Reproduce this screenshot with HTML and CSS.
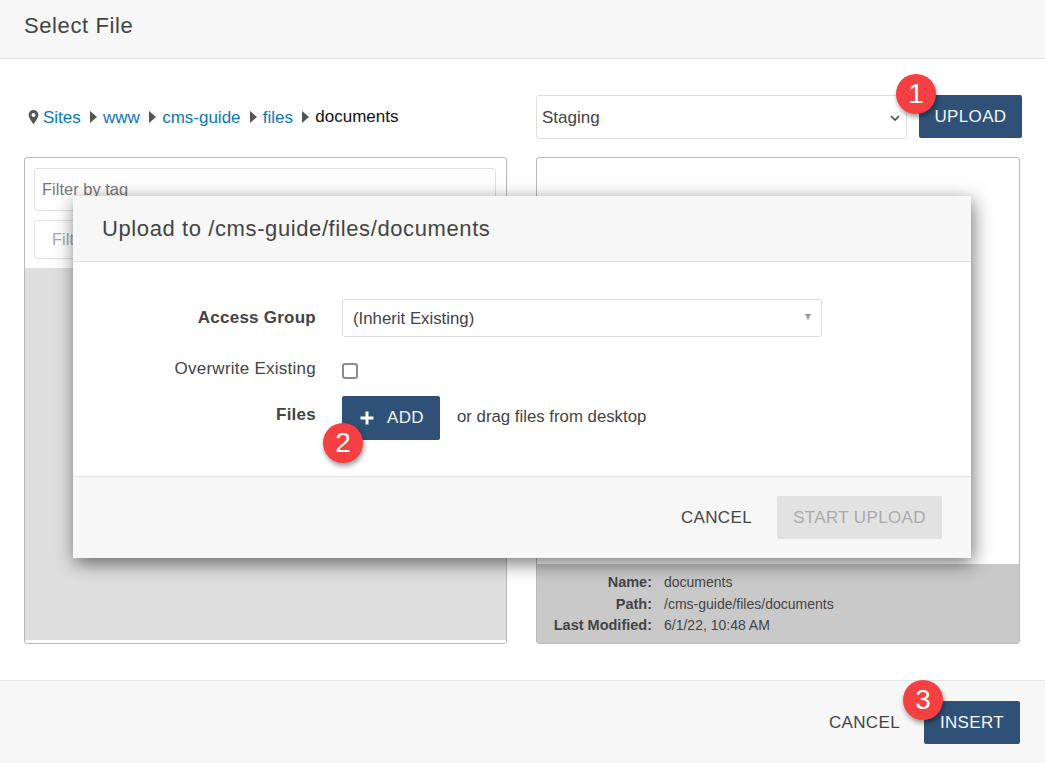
FILE: index.html
```html
<!DOCTYPE html>
<html lang="en">
<head>
<meta charset="utf-8">
<title>Select File</title>
<link rel="stylesheet" href="styles.css">
</head>
<body>
<div class="page">
  <header class="page-head"><h1>Select File</h1></header>
  <main class="page-body">
    <div class="col-left">
      <nav class="crumbs">
        <svg class="pin" viewBox="0 0 12 16" width="11" height="14"><path fill-rule="evenodd" fill="#555" d="M6 0a5.6 5.6 0 0 0-5.6 5.6C.4 9.4 6 16 6 16s5.6-6.6 5.6-10.4A5.6 5.6 0 0 0 6 0zm0 3.4a2.3 2.3 0 1 1 0 4.6 2.3 2.3 0 0 1 0-4.6z"/></svg>
        <a>Sites</a><i class="sep"></i><a>www</a><i class="sep"></i><a>cms-guide</a><i class="sep"></i><a>files</a><i class="sep"></i><span class="current">documents</span>
      </nav>
      <section class="panel tree">
        <div class="filters">
          <div class="field tag">Filter by tag</div>
          <div class="field name">Filter</div>
        </div>
        <div class="tree-fill"></div>
      </section>
    </div>
    <div class="col-right">
      <div class="toolbar">
        <div class="select-box staging">
          <span>Staging</span>
          <svg viewBox="0 0 10 6" width="10" height="6"><path d="M1 1l4 4 4-4" fill="none" stroke="#444" stroke-width="1.6"/></svg>
        </div>
        <div class="anchor">
          <button class="btn primary upload">UPLOAD</button>
          <b class="badge badge-1">1</b>
        </div>
      </div>
      <section class="panel preview">
        <div class="preview-fill"></div>
        <dl class="meta">
          <dt>Name:</dt><dd>documents</dd>
          <dt>Path:</dt><dd>/cms-guide/files/documents</dd>
          <dt>Last Modified:</dt><dd>6/1/22, 10:48 AM</dd>
        </dl>
      </section>
    </div>
  </main>
  <footer class="page-foot">
    <button class="btn plain">CANCEL</button>
    <div class="anchor">
      <button class="btn primary insert">INSERT</button>
      <b class="badge badge-3">3</b>
    </div>
  </footer>

  <div class="modal">
    <div class="modal-head"><h2>Upload to /cms-guide/files/documents</h2></div>
    <div class="modal-body">
      <div class="form-row access">
        <label class="strong">Access Group</label>
        <div class="select-box group"><span>(Inherit Existing)</span><i class="caret"></i></div>
      </div>
      <div class="form-row overwrite">
        <label>Overwrite Existing</label>
        <span class="check"></span>
      </div>
      <div class="form-row files">
        <label class="strong">Files</label>
        <div class="anchor">
          <button class="btn primary add"><svg viewBox="0 0 14 14" width="14" height="14"><path d="M7 0.5v13M0.5 7h13" stroke="#fff" stroke-width="3" fill="none"/></svg>ADD</button>
          <b class="badge badge-2">2</b>
        </div>
        <span class="hint">or drag files from desktop</span>
      </div>
    </div>
    <div class="modal-foot">
      <button class="btn plain">CANCEL</button>
      <button class="btn disabled">START UPLOAD</button>
    </div>
  </div>
</div>
</body>
</html>
```
FILE: styles.css
```css
* { box-sizing: border-box; }
html, body { margin: 0; padding: 0; }
body { font-family: "Liberation Sans", Arial, sans-serif; color: #444; background: #fff; }
.page { position: relative; width: 1045px; height: 763px; display: flex; flex-direction: column; overflow: hidden; }

.page-head { height: 59px; background: #f7f7f7; border-bottom: 1px solid #e2e2e2; padding: 14px 24px 0; }
.page-head h1 { margin: 0; font-size: 22px; line-height: 24px; font-weight: 400; letter-spacing: .6px; color: #444; }

.page-body { flex: 1; display: flex; padding: 36px 23px 36px 24px; gap: 29px; }
.col-left { width: 483px; display: flex; flex-direction: column; }
.col-right { width: 486px; display: flex; flex-direction: column; }

.crumbs { height: 44px; margin-bottom: 18px; display: flex; align-items: center; font-size: 17px; padding-left: 4px; }
.crumbs a { color: #0a79b3; line-height: 44px; padding-top: 1px; }
.pin { margin-right: 4px; }
.sep { width: 0; height: 0; margin: 0 6.25px 0 9px; border-left: 7px solid #555; border-top: 6px solid transparent; border-bottom: 6px solid transparent; }
.current { color: #111; }

.panel { flex: 1; border: 1px solid #b9b9b9; border-radius: 3px; display: flex; flex-direction: column; overflow: hidden; background: #fff; }
.filters { height: 111px; padding: 10px 10px 0 9px; border-bottom: 1px solid #ddd; display: flex; flex-direction: column; gap: 9px; }
.field { border: 1px solid #e0e0e0; border-radius: 3px; font-size: 16.5px; color: #777; padding-left: 7px; line-height: 41px; }
.field.tag { height: 43px; }
.field.name { height: 39px; padding-left: 17px; line-height: 37px; color: #aaa; }
.tree-fill { flex: 1; background: #dfdfdf; margin-bottom: 3px; }

.toolbar { height: 44px; margin-bottom: 18px; display: flex; gap: 12px; }
.select-box { background: #fff; border: 1px solid #ddd; border-radius: 3px; display: flex; align-items: center; justify-content: space-between; color: #444; }
.select-box.staging { width: 371px; height: 44px; padding: 1px 6px 0 5px; font-size: 17px; }
.anchor { position: relative; }

.btn { font-family: inherit; border: 0; border-radius: 2px; padding: 0; cursor: pointer; display: flex; align-items: center; justify-content: center; }
.primary { background: #2f5177; color: #f4f6f8; }
.plain { background: none; color: #444; }
.upload { width: 103px; height: 43px; font-size: 17px; letter-spacing: .35px; }
.insert { width: 96px; height: 43px; font-size: 17px; letter-spacing: .35px; }
.add { width: 98px; height: 44px; font-size: 17px; letter-spacing: .3px; gap: 13px; padding-left: 2px; }
.add svg { flex: none; }

.preview { width: 484px; }
.preview-fill { flex: 1; }
.meta { margin: 0; height: 79px; background: #c9c9c9; display: grid; grid-template-columns: 115px 1fr; column-gap: 12px; grid-auto-rows: 21.5px; padding-top: 8px; font-size: 14px; line-height: 21px; color: #444; }
.meta dt { font-weight: 700; text-align: right; font-size: 14.5px; }
.meta dd { margin: 0; }

.page-foot { height: 83px; background: #f7f7f7; border-top: 1px solid #e2e2e2; display: flex; justify-content: flex-end; align-items: flex-start; padding: 20px 25px 0 0; gap: 24px; }
.page-foot .plain { height: 43px; font-size: 17px; letter-spacing: .35px; }

.modal { position: absolute; left: 73px; top: 196px; width: 898px; height: 362px; background: #fff; display: flex; flex-direction: column; box-shadow: 2px 5px 18px rgba(0,0,0,.55); }
.modal-head { height: 66px; background: #f7f7f7; border-bottom: 1px solid #e2e2e2; padding: 20px 29px 0; }
.modal-head h2 { margin: 0; font-size: 22px; line-height: 25px; font-weight: 400; letter-spacing: .6px; color: #444; }
.modal-body { flex: 1; padding-top: 37px; }
.form-row { display: flex; }
.form-row label { width: 243px; margin-right: 26px; text-align: right; font-size: 17px; letter-spacing: .25px; color: #444; }
.form-row label.strong { font-weight: 700; }
.access { height: 38px; align-items: center; margin-bottom: 25px; }
.select-box.group { width: 480px; height: 38px; padding: 1px 11px 0 10px; font-size: 16.8px; }
.caret { width: 0; height: 0; border-top: 6px solid #999; border-left: 3.5px solid transparent; border-right: 3.5px solid transparent; margin-top: -4px; margin-right: -1px; }
.overwrite { height: 17px; align-items: center; margin-bottom: 17px; }
.overwrite label { line-height: 17px; margin-top: -5px; }
.check { width: 16px; height: 16px; border: 2px solid #8a8a98; border-radius: 3px; background: #fff; margin-top: 0; }
.files { align-items: flex-start; }
.files label { line-height: 38px; }
.hint { font-size: 16.8px; line-height: 42px; margin-left: 17px; color: #444; }

.modal-foot { height: 82px; background: #f7f7f7; border-top: 1px solid #e2e2e2; display: flex; justify-content: flex-end; padding: 19px 29px 0 0; gap: 25px; }
.modal-foot .plain { height: 43px; font-size: 17px; letter-spacing: .35px; }
.disabled { width: 165px; height: 43px; font-size: 17px; letter-spacing: .35px; background: #e2e2e2; color: #aaa; }

.badge { position: absolute; width: 40px; height: 40px; border-radius: 50%; background: #f63f41; color: #fff; font-weight: 400; font-size: 28px; line-height: 40px; text-align: center; box-shadow: 1px 3px 5px rgba(0,0,0,.4); }
.badge-1 { left: -23px; top: -21px; }
.badge-2 { left: -19px; top: 27px; }
.badge-3 { left: -21px; top: -21px; }
```
